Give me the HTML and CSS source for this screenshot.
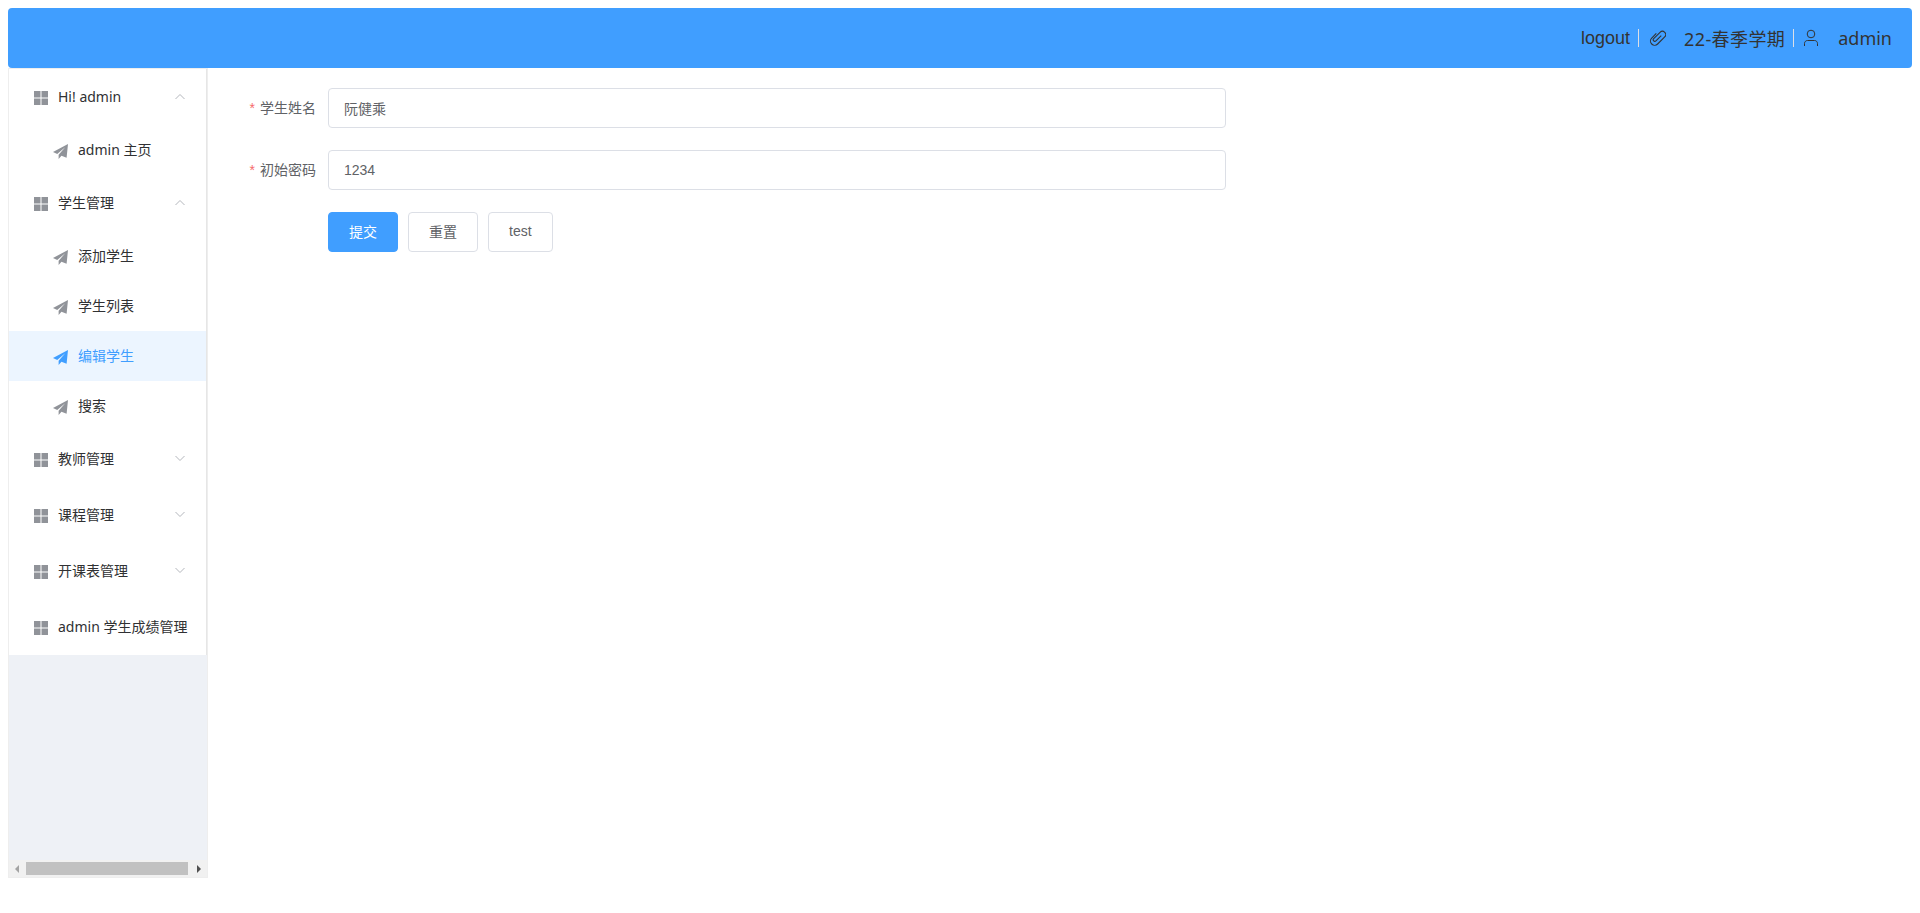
FILE: index.html
```html
<!DOCTYPE html>
<html lang="zh-CN">
<head>
<meta charset="utf-8">
<title>学生管理</title>
<link rel="stylesheet" href="styles.css">
</head>
<body>
<svg class="defs" width="0" height="0" aria-hidden="true">
  <symbol id="grid" viewBox="0 0 14 14"><path d="M0 0h6.500v6.500H0zM7.500 0H14v6.500H7.500zM0 7.500h6.500V14H0zM7.500 7.500H14V14H7.500z"/></symbol>
  <symbol id="plane" viewBox="0 0 16 16"><path d="M16 0 0 8.500l4.500 2.200L13 3.500 6 11.500V16l3-3.500 5.500 2.200z"/></symbol>
  <symbol id="up" viewBox="0 0 12 7"><path d="M1.500 6 6 1.500 10.500 6" fill="none" stroke="currentColor" stroke-width="1"/></symbol>
  <symbol id="down" viewBox="0 0 12 7"><path d="M1.500 1 6 5.500 10.500 1" fill="none" stroke="currentColor" stroke-width="1"/></symbol>
</svg>
<header class="topbar">
  <span class="logout">logout</span>
  <i class="divider"></i>
  <svg class="head-icon clip" viewBox="0 0 18 18"><g transform="translate(9.500 8.500) rotate(45) scale(1)"><path d="M1.300-4V3.500a1.600 1.600 0 0 1-3.200 0V-5.500a3.300 3.300 0 0 1 6.600 0V4.500a4.200 4.200 0 0 1-8.400 0V-2" fill="none" stroke="currentColor" stroke-width="1.100"/></g></svg>
  <span class="term">22-春季学期</span>
  <i class="divider"></i>
  <svg class="head-icon" viewBox="0 0 18 18"><circle cx="9" cy="5" r="3.800" fill="none" stroke="currentColor"/><path d="M2.500 17v-2.500c0-1.700 1.300-3 3-3h7c1.700 0 3 1.300 3 3V17" fill="none" stroke="currentColor"/></svg>
  <span>admin</span>
</header>
<div class="layout">
  <aside class="aside">
    <nav class="menu">
      <div class="title"><svg class="ico-grid"><use href="#grid"/></svg><span class="label">Hi! admin</span><svg class="chev"><use href="#up"/></svg></div>
      <div class="item"><svg class="ico-plane"><use href="#plane"/></svg><span>admin 主页</span></div>
      <div class="title"><svg class="ico-grid"><use href="#grid"/></svg><span class="label">学生管理</span><svg class="chev"><use href="#up"/></svg></div>
      <div class="item"><svg class="ico-plane"><use href="#plane"/></svg><span>添加学生</span></div>
      <div class="item"><svg class="ico-plane"><use href="#plane"/></svg><span>学生列表</span></div>
      <div class="item active"><svg class="ico-plane"><use href="#plane"/></svg><span>编辑学生</span></div>
      <div class="item"><svg class="ico-plane"><use href="#plane"/></svg><span>搜索</span></div>
      <div class="title"><svg class="ico-grid"><use href="#grid"/></svg><span class="label">教师管理</span><svg class="chev"><use href="#down"/></svg></div>
      <div class="title"><svg class="ico-grid"><use href="#grid"/></svg><span class="label">课程管理</span><svg class="chev"><use href="#down"/></svg></div>
      <div class="title"><svg class="ico-grid"><use href="#grid"/></svg><span class="label">开课表管理</span><svg class="chev"><use href="#down"/></svg></div>
      <div class="title"><svg class="ico-grid"><use href="#grid"/></svg><span class="label">admin 学生成绩管理</span></div>
    </nav>
    <div class="hscroll">
      <i class="arrow left"></i>
      <div class="thumb"></div>
      <i class="arrow right"></i>
    </div>
  </aside>
  <main class="main">
    <form class="form">
      <div class="row">
        <label class="form-label"><em>*</em>学生姓名</label>
        <input class="input" type="text" value="阮健乘">
      </div>
      <div class="row">
        <label class="form-label"><em>*</em>初始密码</label>
        <input class="input latin" type="text" value="1234">
      </div>
      <div class="row actions">
        <button class="btn primary" type="button">提交</button>
        <button class="btn" type="button">重置</button>
        <button class="btn latin" type="button">test</button>
      </div>
    </form>
  </main>
</div>
</body>
</html>
```
FILE: styles.css
```css
* { box-sizing: border-box; }
html, body { margin: 0; height: 100%; }
body {
  padding: 8px;
  background: #fff;
  font-family: "Noto Sans", "Noto Sans CJK SC", sans-serif;
  font-size: 14px;
  color: #303133;
  overflow: hidden;
}
.defs { position: absolute; }
.topbar {
  height: 60px;
  background: #409eff;
  border-radius: 4px;
  display: flex;
  align-items: center;
  justify-content: flex-end;
  padding-right: 20px;
  font-size: 18px;
  color: #333;
}
.logout { font-family: "Liberation Sans", sans-serif; }
.term { letter-spacing: .4px; }
.divider { width: 1px; height: 18px; margin: 0 8px; background: #dcdfe6; }
.head-icon { width: 18px; height: 18px; margin-right: 18px; color: #333; flex: none; }
.clip { margin-left: 1px; }
.layout { display: flex; }
.aside {
  width: 200px;
  height: 810px;
  flex: none;
  background: #eef1f6;
  border: 1px solid #eee;
  display: flex;
  flex-direction: column;
}
.menu { background: #fff; border-right: 1px solid #e6e6e6; }
.title, .item {
  display: flex;
  align-items: center;
  white-space: nowrap;
  color: #303133;
}
.title { height: 56px; padding-left: 25px; }
.item { height: 50px; padding-left: 44px; }
.item span, .label { margin-bottom: 2px; }
.item.active { background: #ecf5ff; color: #409eff; }
.ico-grid { width: 14px; height: 14px; margin: 2px 10px 0 0; fill: #909399; flex: none; }
.ico-plane { width: 15px; height: 15px; margin: 3px 10px 0 0; fill: #909399; flex: none; }
.active .ico-plane { fill: #409eff; }
.label { flex: 1; }
.chev { width: 12px; height: 7px; margin: 0 20px 2px 0; color: #b4b7bd; flex: none; }
.hscroll {
  margin-top: auto;
  height: 17px;
  background: #f1f1f1;
  display: flex;
  align-items: center;
}
.thumb { width: 162px; height: 13px; background: #c1c1c1; margin: 0 9px 0 7px; }
.arrow { width: 0; height: 0; border-style: solid; border-width: 4px 0; border-color: transparent; flex: none; }
.arrow.left { margin-left: 6px; border-right: 4px solid #a3a3a3; border-left: 0; }
.arrow.right { border-left: 4px solid #505050; }
.main { flex: 1; padding: 20px; }
.form { width: 998px; }
.row { display: flex; margin-bottom: 22px; }
.form-label {
  width: 100px;
  flex: none;
  line-height: 40px;
  padding-right: 12px;
  text-align: right;
  color: #606266;
}
.form-label em {
  font: normal 14px "Liberation Sans", sans-serif;
  margin-right: 5px;
  color: #f56c6c;
}
.input {
  width: 898px;
  height: 40px;
  padding: 0 15px;
  border: 1px solid #dcdfe6;
  border-radius: 4px;
  font: inherit;
  color: #606266;
  outline: none;
}
.actions { padding-left: 100px; gap: 10px; }
.btn {
  height: 40px;
  padding: 0 20px 2px;
  background: #fff;
  border: 1px solid #dcdfe6;
  border-radius: 4px;
  font: inherit;
  color: #606266;
}
.btn.primary { background: #409eff; border-color: #409eff; color: #fff; }
.latin { font-family: "Liberation Sans", sans-serif; }
```
